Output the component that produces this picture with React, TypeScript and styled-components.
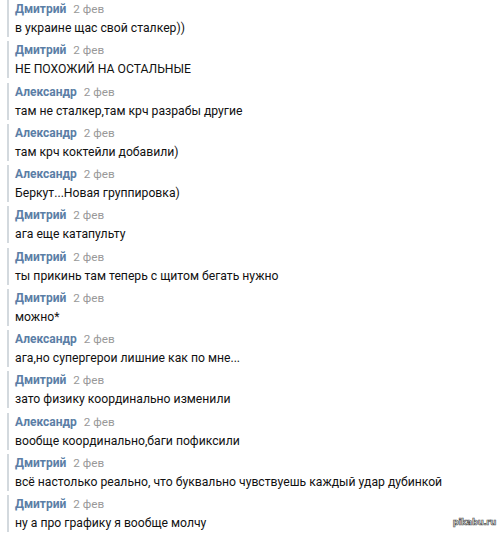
import styled, { createGlobalStyle } from 'styled-components'

const comments = [
  { name: 'Дмитрий', text: 'в украине щас свой сталкер))' },
  { name: 'Дмитрий', text: 'НЕ ПОХОЖИЙ НА ОСТАЛЬНЫЕ' },
  { name: 'Александр', text: 'там не сталкер,там крч разрабы другие' },
  { name: 'Александр', text: 'там крч коктейли добавили)' },
  { name: 'Александр', text: 'Беркут...Новая группировка)' },
  { name: 'Дмитрий', text: 'ага еще катапульту' },
  { name: 'Дмитрий', text: 'ты прикинь там теперь с щитом бегать нужно' },
  { name: 'Дмитрий', text: 'можно*' },
  { name: 'Александр', text: 'ага,но супергерои лишние как по мне...' },
  { name: 'Дмитрий', text: 'зато физику координально изменили' },
  { name: 'Александр', text: 'вообще координально,баги пофиксили' },
  { name: 'Дмитрий', text: 'всё настолько реально, что буквально чувствуешь каждый удар дубинкой' },
  { name: 'Дмитрий', text: 'ну а про графику я вообще молчу' },
]

function App() {
  return (
    <Page>
      <GlobalStyles />
      <List>
        {comments.map((c, i) => (
          <Comment key={i}>
            <Head>
              <Author>{c.name}</Author>
              <Date>2 фев</Date>
            </Head>
            <Message>{c.text}</Message>
          </Comment>
        ))}
      </List>
      <Watermark>pikabu.ru</Watermark>
    </Page>
  )
}

const GlobalStyles = createGlobalStyle`
  html, body {
    margin: 0;
    padding: 0;
    background: #fff;
  }
  body {
    font-family: Roboto, "Noto Sans", sans-serif;
  }
`

const Page = styled.div`
  position: relative;
  width: 501px;
  height: 535px;
  overflow: hidden;
`

const List = styled.div`
  display: flex;
  flex-direction: column;
  gap: 4.25px;
  padding: 0 0 0 7px;
`

const Comment = styled.div`
  height: 37px;
  box-sizing: border-box;
  border-left: 2px solid #d3d9de;
  padding: 1px 0 0 6px;
`

const Head = styled.div`
  display: flex;
  align-items: baseline;
  gap: 7px;
  height: 16px;
  line-height: 16px;
`

const Author = styled.span`
  color: #5b7ea6;
  font-weight: 700;
  font-size: 12px;
`

const Date = styled.span`
  color: #999;
  font-size: 11.7px;
`

const Message = styled.div`
  margin-top: 3px;
  color: #111;
  font-size: 12.2px;
  line-height: 16px;
  white-space: nowrap;
`

const Watermark = styled.div`
  position: absolute;
  right: 5px;
  bottom: 8px;
  font-family: "DejaVu Sans", sans-serif;
  font-weight: 700;
  font-size: 8.5px;
  color: #fff;
  letter-spacing: -0.3px;
  -webkit-text-stroke: 0.7px #555;
`

export default App
